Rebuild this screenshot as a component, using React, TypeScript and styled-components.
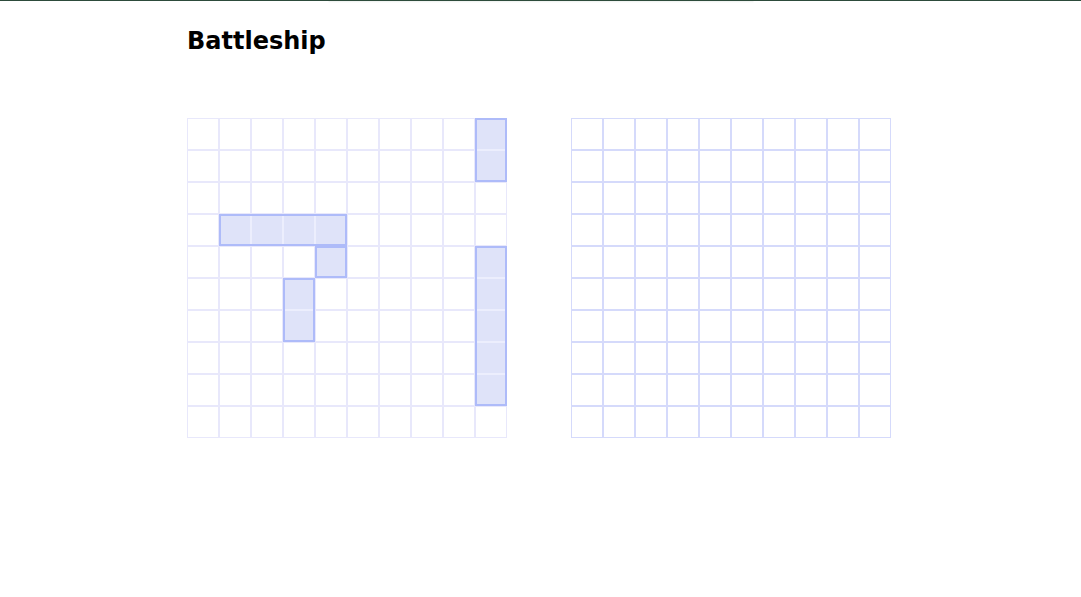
import React, {FunctionComponent} from "react";
import styled, {createGlobalStyle} from "styled-components";

const GlobalStyle = createGlobalStyle`
  html, body {
    margin: 0;
    padding: 0;
    background: #fff;
    font-family: "DejaVu Sans", "Noto Sans", sans-serif;
  }
`;

const TopBar = styled.div`
  height: 1px;
  background-color: #2d4b3b;
  position: relative;

  &::after {
    content: "";
    position: absolute;
    left: 50%;
    top: 1px;
    width: 425px;
    height: 2px;
    transform: translateX(-50%);
    background: linear-gradient(to bottom, rgba(40, 70, 50, .08), rgba(40, 70, 50, 0));
  }
`;

const Container = styled.main`
  width: 707px;
  margin: 0 auto;
  padding-top: 26px;
`;

const Title = styled.h1`
  margin: 0;
  font-size: 24px;
  font-weight: bold;
  color: #000;
`;

const Boards = styled.div`
  display: flex;
  gap: 64px;
  margin-top: 63px;
`;

const Board = styled.div`
  position: relative;
  display: grid;
  grid-template-columns: repeat(10, 32px);
  grid-auto-rows: 32px;
  width: 320px;
`;

const Cell = styled.div<{$line: string; $filled?: boolean}>`
  box-sizing: border-box;
  border: 1px solid ${p => (p.$filled ? "#eceefd" : p.$line)};
  background-color: ${p => (p.$filled ? "#dfe3f9" : "#fff")};
`;

const Ship = styled.div`
  position: absolute;
  box-sizing: border-box;
  border: 2px solid #aebbf9;
  pointer-events: none;
`;

interface ShipData {
  row: number;
  col: number;
  len: number;
  vertical: boolean;
}

const ships: ShipData[] = [
  {row: 0, col: 9, len: 2, vertical: true},
  {row: 3, col: 1, len: 4, vertical: false},
  {row: 4, col: 4, len: 1, vertical: false},
  {row: 5, col: 3, len: 2, vertical: true},
  {row: 4, col: 9, len: 5, vertical: true},
];

const CELL = 32;

const occupied = (r: number, c: number) =>
  ships.some(s =>
    s.vertical
      ? c === s.col && r >= s.row && r < s.row + s.len
      : r === s.row && c >= s.col && c < s.col + s.len
  );

const cells = Array.from({length: 100}, (_, i) => i);

const PlayerBoard: FunctionComponent = () => (
  <Board>
    {cells.map(i => (
      <Cell key={i} $line="#e8e8fb" $filled={occupied(Math.floor(i / 10), i % 10)} />
    ))}
    {ships.map((s, i) => (
      <Ship
        key={i}
        style={{
          left: s.col * CELL,
          top: s.row * CELL,
          width: (s.vertical ? 1 : s.len) * CELL,
          height: (s.vertical ? s.len : 1) * CELL,
        }}
      />
    ))}
  </Board>
);

const TargetBoard: FunctionComponent = () => (
  <Board>
    {cells.map(i => (
      <Cell key={i} $line="#d5dafb" />
    ))}
  </Board>
);

const App: FunctionComponent = () => (
  <>
    <GlobalStyle />
    <TopBar />
    <Container>
      <Title>Battleship</Title>
      <Boards>
        <PlayerBoard />
        <TargetBoard />
      </Boards>
    </Container>
  </>
);

export default App;
